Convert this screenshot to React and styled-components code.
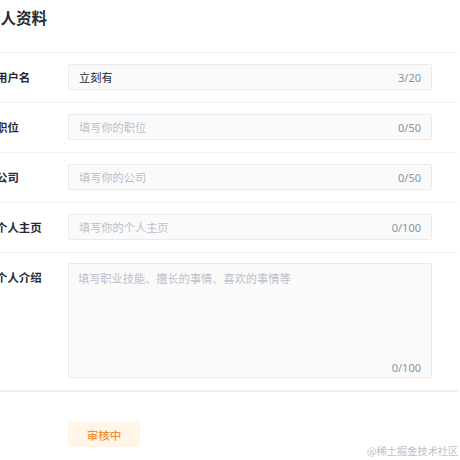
import React from "react";
import styled, {createGlobalStyle} from "styled-components";

const GlobalStyle = createGlobalStyle`
    html, body {
        margin: 0;
        padding: 0;
        background: #fff;
        overflow: hidden;
    }

    body {
        font-family: "Noto Sans CJK SC", "Noto Sans", sans-serif;
        color: #252933;
    }
`;

const Page = styled.div`
    position: relative;
    width: 460px;
    height: 460px;
    overflow: hidden;
`;

const Panel = styled.div`
    margin-left: -15px;
    width: 473px;
`;

const Title = styled.h1`
    margin: 0;
    padding: 6px 0 24px;
    font-size: 15.5px;
    line-height: 22px;
    font-weight: 700;
    color: #252933;
`;

const Row = styled.div`
    display: flex;
    align-items: ${({$top}) => ($top ? "flex-start" : "center")};
    border-top: 1px solid #f1f2f5;
    padding: ${({$top}) => ($top ? "10px 0 12px" : "11px 0 12px")};
`;

const Label = styled.label`
    width: 83px;
    flex: none;
    padding-left: 11px;
    box-sizing: border-box;
    font-size: 11.4px;
    font-weight: 600;
    line-height: 26px;
    color: #252933;
    margin-top: ${({$top}) => ($top ? "1px" : "0")};
`;

const Field = styled.div`
    position: relative;
    width: 364px;
    height: ${({$tall}) => ($tall ? "115px" : "26px")};
    box-sizing: border-box;
    background: #fafafa;
    border: 1px solid #e9eaed;
    border-radius: 2px;
    display: flex;
    align-items: ${({$tall}) => ($tall ? "flex-start" : "center")};
    padding: ${({$tall}) => ($tall ? "5px 10px 0 9px" : "0 10px 0 10px")};
`;

const Text = styled.span`
    flex: 1;
    font-size: 11.2px;
    line-height: 18px;
    color: ${({$empty}) => ($empty ? "#b9bfc9" : "#252933")};
`;

const Counter = styled.span`
    font-family: "Noto Sans", "Noto Sans CJK SC", sans-serif;
    font-size: 11px;
    color: #8a919f;
    ${({$tall}) => $tall && "position: absolute; right: 10px; bottom: 2px;"}
`;

const Footer = styled.div`
    border-top: 2px solid #f1f2f5;
    padding: 30px 0 0 83px;
`;

const StatusButton = styled.div`
    width: 72px;
    height: 25px;
    display: flex;
    align-items: center;
    justify-content: center;
    background: #fff6e9;
    border-radius: 2px;
    font-size: 11.5px;
    font-weight: 500;
    color: #ef9136;
`;

const Watermark = styled.div`
    position: absolute;
    right: 2px;
    bottom: 1px;
    font-family: "Noto Sans CJK SC", serif;
    font-size: 10.5px;
    line-height: 16px;
    color: #bfbfbf;
    letter-spacing: -0.3px;
`;

const fields = [
    {label: "用户名", value: "立刻有", count: "3/20"},
    {label: "职位", placeholder: "填写你的职位", count: "0/50"},
    {label: "公司", placeholder: "填写你的公司", count: "0/50"},
    {label: "个人主页", placeholder: "填写你的个人主页", count: "0/100"},
];

const App = () => (
    <>
        <GlobalStyle/>
        <Page>
            <Panel>
                <Title>个人资料</Title>
                {fields.map((f) => (
                    <Row key={f.label}>
                        <Label>{f.label}</Label>
                        <Field>
                            <Text $empty={!f.value}>{f.value || f.placeholder}</Text>
                            <Counter>{f.count}</Counter>
                        </Field>
                    </Row>
                ))}
                <Row $top>
                    <Label $top>个人介绍</Label>
                    <Field $tall>
                        <Text $empty>填写职业技能、擅长的事情、喜欢的事情等</Text>
                        <Counter $tall>0/100</Counter>
                    </Field>
                </Row>
                <Footer>
                    <StatusButton>审核中</StatusButton>
                </Footer>
            </Panel>
            <Watermark>@稀土掘金技术社区</Watermark>
        </Page>
    </>
);

export default App;
